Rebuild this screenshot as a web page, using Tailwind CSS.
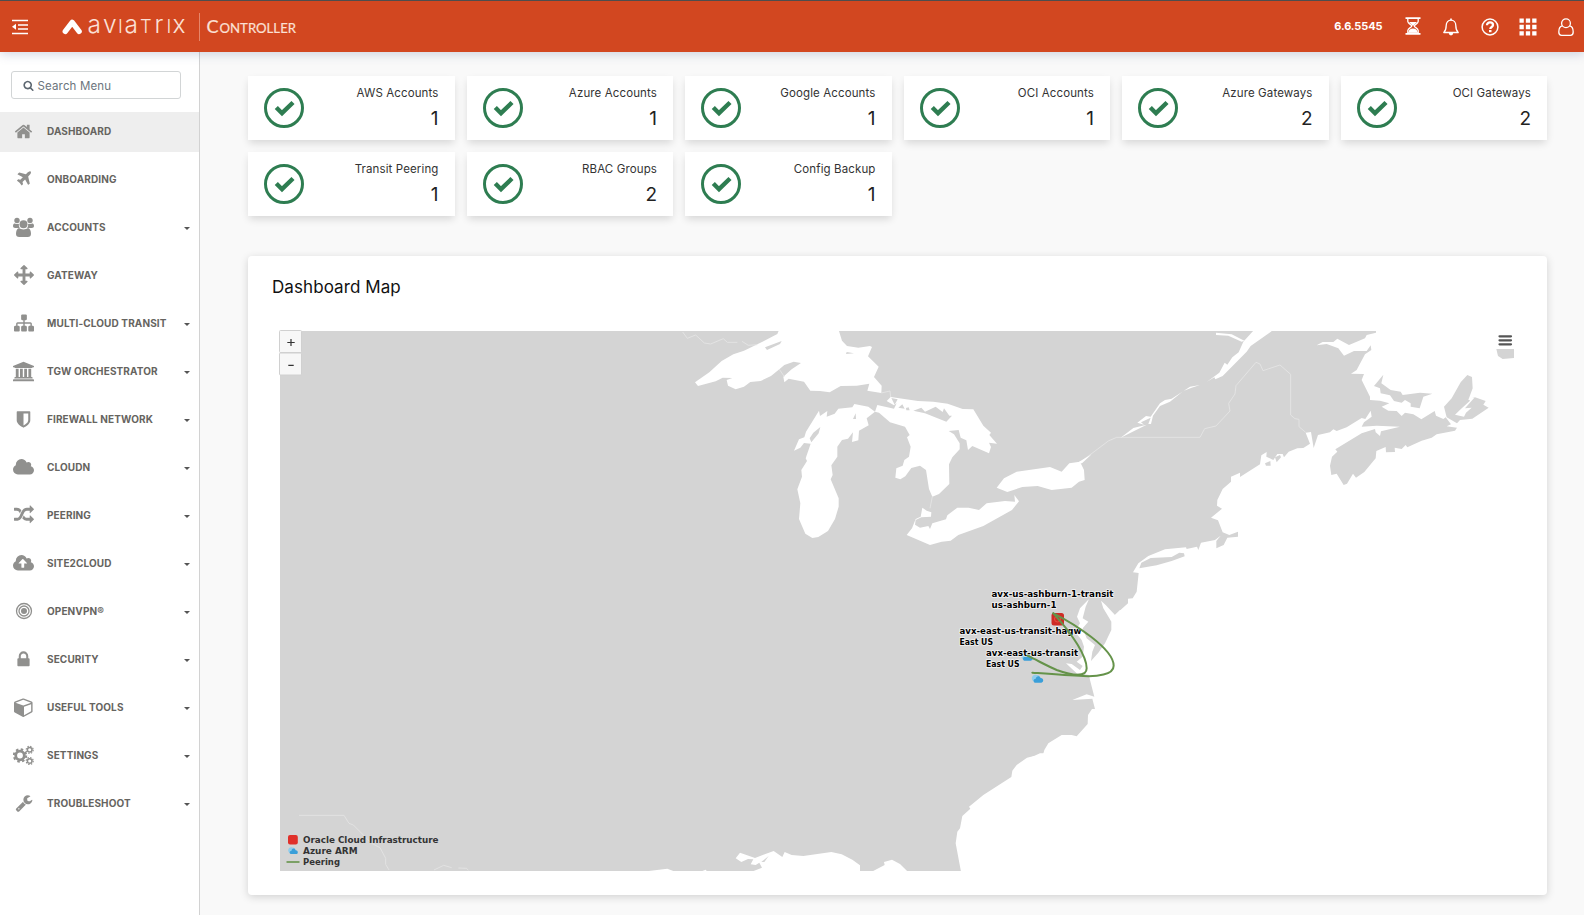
<!DOCTYPE html>
<html lang="en">
<head>
<meta charset="utf-8">
<title>Aviatrix Controller</title>
<script src="https://cdn.jsdelivr.net/npm/@tailwindcss/browser@4"></script>
</head>
<body class="h-screen overflow-hidden bg-[#f9f9f9] font-['Inter',sans-serif] flex flex-col">

<svg class="hidden">
  <symbol id="home" viewBox="0 0 1792 1792"><path d="M1472 992v480q0 26-19 45t-45 19h-384v-384h-256v384h-384q-26 0-45-19t-19-45v-480q0-1 .5-3t.5-3l575-474 575 474q1 2 1 6zm223-69l-62 74q-8 9-21 11h-3q-13 0-21-7l-692-577-692 577q-12 8-24 7-13-2-21-11l-62-74q-8-10-7-23.5t11-21.5l719-599q32-26 76-26t76 26l244 204v-195q0-14 9-23t23-9h192q14 0 23 9t9 23v408l219 182q10 8 11 21.5t-7 23.5z"/></symbol>
  <symbol id="plane" viewBox="0 0 1792 1792"><path d="M1568 160q44 52 12 148t-108 172l-161 161 160 696q5 19-12 33l-128 96q-7 6-19 6-4 0-7-1-15-3-21-16l-279-508-259 259 53 194q5 17-8 31l-96 96q-9 9-23 9h-2q-15-2-24-13l-189-252-252-189q-11-7-13-23-1-13 9-25l96-97q9-9 23-9 6 0 8 1l194 53 259-259-508-279q-14-8-17-24-2-16 9-27l128-128q14-13 30-8l665 159 160-160q76-76 172-108t148 12z"/></symbol>
  <symbol id="users" viewBox="0 0 21 20"><circle cx="4" cy="3" r="2.7"/><circle cx="17" cy="3" r="2.7"/><path d="M0 8.5C0 6.500 1 6 2 6c1 .6 3 .8 4 .2C5.600 8 6 9.300 6.800 10.500H2.200C.8 10.500 0 9.800 0 8.500zM21 8.500c0-2-1-2.500-2-2.500-1 .6-3 .8-4 .2.4 1.800 0 3.100-.8 4.300h4.600c1.400 0 2.200-.7 2.200-2z"/><circle cx="10.500" cy="6.700" r="4"/><path d="M6 10.600c2 1.900 7 1.900 9 0 2 .4 3 2.900 3 5.600 0 2.200-1.200 3.300-3.200 3.300H6.200C4.200 19.500 3 18.400 3 16.200c0-2.700 1-5.200 3-5.600z"/></symbol>
  <symbol id="arrows" viewBox="0 0 1792 1792"><path d="M1792 896q0 26-19 45l-256 256q-19 19-45 19t-45-19-19-45v-128h-384v384h128q26 0 45 19t19 45-19 45l-256 256q-19 19-45 19t-45-19l-256-256q-19-19-19-45t19-45 45-19h128v-384h-384v128q0 26-19 45t-45 19-45-19l-256-256q-19-19-19-45t19-45l256-256q19-19 45-19t45 19 19 45v128h384v-384h-128q-26 0-45-19t-19-45 19-45l256-256q19-19 45-19t45 19l256 256q19 19 19 45t-19 45-45 19h-128v384h384v-128q0-26 19-45t45-19 45 19l256 256q19 19 19 45z"/></symbol>
  <symbol id="sitemap" viewBox="0 0 1792 1792"><path d="M1792 1248v320q0 40-28 68t-68 28h-320q-40 0-68-28t-28-68v-320q0-40 28-68t68-28h96v-192h-512v192h96q40 0 68 28t28 68v320q0 40-28 68t-68 28h-320q-40 0-68-28t-28-68v-320q0-40 28-68t68-28h96v-192h-512v192h96q40 0 68 28t28 68v320q0 40-28 68t-68 28h-320q-40 0-68-28t-28-68v-320q0-40 28-68t68-28h96v-192q0-52 38-90t90-38h512v-192h-96q-40 0-68-28t-28-68v-320q0-40 28-68t68-28h320q40 0 68 28t28 68v320q0 40-28 68t-68 28h-96v192h512q52 0 90 38t38 90v192h96q40 0 68 28t28 68z"/></symbol>
  <symbol id="bank" viewBox="0 0 1920 1792"><path d="M960 0l960 384v128h-128q0 26-20.500 45t-48.500 19h-1526q-28 0-48.500-19t-20.500-45h-128v-128zm-704 640h256v768h128v-768h256v768h128v-768h256v768h128v-768h256v768h59q28 0 48.500 19t20.500 45v64h-1664v-64q0-26 20.500-45t48.500-19h59v-768zm1595 960q28 0 48.500 19t20.500 45v128h-1920v-128q0-26 20.500-45t48.500-19h1782z"/></symbol>
  <symbol id="shield" viewBox="0 0 1792 1792"><path d="M1344 960v-640h-448v1137q119-63 213-137 235-184 235-360zm192-768v768q0 86-33.500 170.500t-83 150-118 127.500-126.500 103-121 77.500-89.500 49.500-42.500 20q-12 6-26 6t-26-6q-16-7-42.500-20t-89.500-49.500-121-77.500-126.500-103-118-127.500-83-150-33.500-170.500v-768q0-26 19-45t45-19h1152q26 0 45 19t19 45z"/></symbol>
  <symbol id="cloud" viewBox="0 0 1920 1792"><path d="M1920 1152q0 159-112.500 271.500t-271.500 112.500h-1088q-185 0-316.500-131.500t-131.500-316.500q0-132 71-241.500t187-163.500q-2-28-2-43 0-212 150-362t362-150q158 0 286.500 88t187.500 230q70-62 166-62 106 0 181 75t75 181q0 75-41 138 129 30 213 134.500t84 239.500z"/></symbol>
  <symbol id="upload" viewBox="0 0 1920 1792"><path fill-rule="evenodd" d="M1280 864q0-14-9-23l-352-352q-9-9-23-9t-23 9l-351 351q-10 12-10 24 0 14 9 23t23 9h224v352q0 13 9.500 22.500t22.500 9.500h192q13 0 22.500-9.500t9.500-22.500v-352h224q13 0 22.500-9.500t9.500-22.500zm640 288q0 159-112.500 271.500t-271.500 112.500h-1088q-185 0-316.500-131.500t-131.500-316.500q0-132 71-241.500t187-163.500q-2-28-2-43 0-212 150-362t362-150q158 0 286.500 88t187.500 230q70-62 166-62 106 0 181 75t75 181q0 75-41 138 129 30 213 134.500t84 239.500z"/></symbol>
  <symbol id="random" viewBox="0 0 1792 1792"><path d="M666 481q-60 92-137 273-22-45-37-72.500t-40.500-63.500-51-56.500-63-35-81.500-14.500h-224q-14 0-23-9t-9-23v-192q0-14 9-23t23-9h224q250 0 410 225zm1126 799q0 14-9 23l-320 320q-9 9-23 9-13 0-22.500-9.500t-9.500-22.500v-192q-32 0-85 .5t-81 1-73-1-71-5-64-10.500-63-18.500-58-28.500-59-40-55-53.500-56-69.500q59-93 136-273 22 45 37 72.500t40.500 63.500 51 56.500 63 35 81.500 14.500h256v-192q0-14 9-23t23-9q12 0 24 10l319 319q9 9 9 23zm0-896q0 14-9 23l-320 320q-9 9-23 9-13 0-22.500-9.500t-9.500-22.500v-192h-256q-48 0-87 15t-69 45-51 61.500-45 77.500q-32 62-78 171-29 66-49.500 111t-54 105-64 100-74 83-90 68.500-106.500 42-128 16.500h-224q-14 0-23-9t-9-23v-192q0-14 9-23t23-9h224q48 0 87-15t69-45 51-61.500 45-77.500q32-62 78-171 29-66 49.500-111t54-105 64-100 74-83 90-68.500 106.500-42 128-16.500h256v-192q0-14 9-23t23-9q12 0 24 10l319 319q9 9 9 23z"/></symbol>
  <symbol id="target" viewBox="0 0 20 20"><circle cx="10" cy="10" r="3"/><g fill="none" stroke="currentColor" stroke-width="1.300"><circle cx="10" cy="10" r="5"/><circle cx="10" cy="10" r="7.500"/></g></symbol>
  <symbol id="lock" viewBox="0 0 1792 1792"><path d="M640 768h512v-192q0-106-75-181t-181-75-181 75-75 181v192zm832 96v576q0 40-28 68t-68 28h-960q-40 0-68-28t-28-68v-576q0-40 28-68t68-28h32v-192q0-184 132-316t316-132 316 132 132 316v192h32q40 0 68 28t28 68z"/></symbol>
  <symbol id="cube" viewBox="0 0 1792 1792"><path d="M896 1629l640-349v-636l-640 233v752zm-64-865l698-254-698-254-698 254zm832-252v768q0 35-18 65t-49 47l-704 384q-28 16-61 16t-61-16l-704-384q-31-17-49-47t-18-65v-768q0-40 23-73t61-47l704-256q22-8 44-8t44 8l704 256q38 14 61 47t23 73z"/></symbol>
  <symbol id="cogs" viewBox="0 0 21 20"><g fill="none" stroke="currentColor"><circle cx="7" cy="10" r="4.300" stroke-width="2.800"/><circle cx="7" cy="10" r="6.200" stroke-width="2" stroke-dasharray="2.500 2.370"/><circle cx="16.700" cy="4.300" r="2.300" stroke-width="1.500"/><circle cx="16.700" cy="4.300" r="3.500" stroke-width="1.200" stroke-dasharray="1.400 1.350"/><circle cx="16.700" cy="15.500" r="2.300" stroke-width="1.500"/><circle cx="16.700" cy="15.500" r="3.500" stroke-width="1.200" stroke-dasharray="1.400 1.350"/></g></symbol>
  <symbol id="wrench" viewBox="0 0 1792 1792"><path d="M448 1472q0-26-19-45t-45-19-45 19-19 45 19 45 45 19 45-19 19-45zm644-420l-682 682q-37 37-90 37-52 0-91-37l-106-108q-38-36-38-90 0-53 38-91l681-681q39 98 114.500 173.500t173.500 114.500zm634-435q0 39-23 106-47 134-164.500 217.500t-258.500 83.500q-185 0-316.500-131.500t-131.500-316.500 131.500-316.500 316.500-131.500q58 0 121.500 16.500t107.500 46.500q16 11 16 28t-16 28l-293 169v224l193 107q5-3 79-48.500t135.500-81 70.500-35.500q15 0 23.500 10t8.500 25z"/></symbol>
  <symbol id="check" viewBox="0 0 40 40"><circle cx="20" cy="20" r="18.500" fill="none" stroke="#2e7d51" stroke-width="3"/><path d="M12.300 19.500l5.700 5.700L29 14.500" fill="none" stroke="#2e7d51" stroke-width="4.400"/></symbol>
  <symbol id="azure" viewBox="0 0 13 10"><path d="M.8 5.500C.5 2.500 3 .5 5.500 1.500 8 1 9 3 9 4L4 7.500 2 7.800z" fill="#8fcdec"/><path d="M4 9.200C1.800 8.600 2.200 5 4.800 5.200 5 2 9 1.800 9.600 4.600c3-.2 3.600 4.200.8 4.600z" fill="#3a9fd9"/></symbol>
</svg>

<header class="relative z-10 flex h-[52px] shrink-0 items-center border-t border-[#4d4d4d] bg-[#d24720] text-white shadow-[0_2px_10px_rgba(90,100,150,0.28)]">
  <svg class="ml-3 h-4 w-4" viewBox="0 0 16 16"><path d="M0 1.500h16M6 6h10M6 10h10M0 14.500h16" stroke="#fff" stroke-width="1.300"/><path d="M4 4.800v6L0 7.800z" fill="#fff"/></svg>
  <svg class="ml-[32px] h-[51px] w-[250px]" viewBox="60 1 250 51">
    <path d="M65.300 31.300L72.200 22.300 79.100 31.300" fill="none" stroke="#fff" stroke-width="5.400" stroke-linecap="round" stroke-linejoin="round"/>
    <text fill="#fbe0d6" font-family="Inter" font-weight="300" font-size="24.500" y="33.300"><tspan x="87.500">a</tspan><tspan x="103">v</tspan><tspan x="118" font-size="18.300">I</tspan><tspan x="124.500">a</tspan><tspan x="140" font-size="18.300">T</tspan><tspan x="154.500">r</tspan><tspan x="166.500" font-size="18.300">I</tspan><tspan x="172.500">x</tspan></text>
    <path d="M199.500 13v28" stroke="#e6866a"/>
    <text fill="#fbe0d6" stroke="#fbe0d6" stroke-width=".2" font-family="Lato" font-weight="400" y="33.300"><tspan x="206.500" font-size="18">C</tspan><tspan x="219.500" font-size="14" textLength="76.500" lengthAdjust="spacingAndGlyphs">ONTROLLER</tspan></text>
  </svg>
  <span class="ml-auto mr-[22px] text-[11px] font-bold leading-4 tracking-[-0.1px] mb-px">6.6.5545</span>
  <svg class="mr-[22.300px] mb-px h-[18px] w-4" viewBox="0 0 16 18"><path d="M.5 1.200h15M.5 16.800h15" stroke="#fff" stroke-width="1.800"/><path d="M2.800 2v2.500C3 7 6.800 7.500 6.800 9S3 11 2.800 13.500V16h10.400v-2.500C13 11 9.200 10.500 9.200 9S13 7 13.200 4.500V2" fill="none" stroke="#fff" stroke-width="1.300"/><path d="M4 5h8L8 9zM3.500 15.500c0-2.500 2-4 4.500-4s4.500 1.500 4.500 4z" fill="#fff"/></svg>
  <svg class="mr-[21.700px] h-[18px] w-4" viewBox="0 0 16 18"><path d="M.8 14.500C3 12.500 3.200 10 3.200 7.500c0-3.200 2-5.300 4.800-5.300s4.800 2.100 4.800 5.300c0 2.500.2 5 2.400 7z" fill="none" stroke="#fff" stroke-width="1.300" stroke-linejoin="round"/><path d="M5.800 15h4.400a2.200 2.400 0 0 1-4.400 0zM7.200.5h1.600v2H7.200z" fill="#fff"/></svg>
  <svg class="mr-[20px] h-[18px] w-[18px]" viewBox="0 0 18 18"><circle cx="9" cy="9" r="7.900" fill="none" stroke="#fff" stroke-width="1.500"/><path d="M6 7.200C6 3.400 12 3.800 12 7c0 2-2.700 1.900-2.700 4" fill="none" stroke="#fff" stroke-width="2.300"/><path d="M8 12h2.500v2.200H8z" fill="#fff"/></svg>
  <svg class="mr-[21.500px] h-[18px] w-[18px]" viewBox="0 0 18 18" fill="#fff"><path d="M.5.500h4.300v4.300H.5zM6.850.500h4.300v4.300H6.850zM13.200.500h4.300v4.300h-4.300zM.5 6.850h4.300v4.300H.5zM6.850 6.850h4.300v4.300H6.850zM13.200 6.850h4.300v4.300h-4.300zM.5 13.200h4.300v4.300H.5zM6.850 13.200h4.300v4.300H6.850zM13.200 13.200h4.300v4.300h-4.300z"/></svg>
  <svg class="mr-[10px] h-[18px] w-4" viewBox="0 0 16 18" fill="none" stroke="#fff" stroke-width="1.300"><circle cx="8" cy="5.200" r="4.400"/><path d="M4.300 7.800C1.800 8.300.8 11 .8 14c0 2 1 3.300 2.800 3.300h8.800c1.800 0 2.800-1.300 2.800-3.300 0-3-1-5.700-3.500-6.200"/></svg>
</header>

<div class="flex min-h-0 flex-1">
  <nav class="w-[200px] shrink-0 border-r border-[#d2d2d2] bg-white pt-[19px]">
    <div class="ml-[11px] flex h-7 w-[170px] items-center gap-1 rounded-[3px] border border-[#d2d5d6] pl-[10.500px] text-[#6c757d]">
      <svg class="h-[11px] w-[11px]" viewBox="0 0 1792 1792" fill="#5c6670"><path d="M1216 832q0-185-131.500-316.500t-316.500-131.500-316.500 131.500-131.500 316.500 131.500 316.500 316.500 131.500 316.500-131.500 131.500-316.500zm512 832q0 52-38 90t-90 38q-54 0-90-38l-343-342q-179 124-399 124-143 0-273.500-55.500t-225-150-150-225-55.500-273.500 55.500-273.500 150-225 225-150 273.500-55.500 273.500 55.500 225 150 150 225 55.500 273.500q0 220-124 399l343 343q37 37 37 90z"/></svg>
      <span class="pt-px text-[11.500px] leading-4 tracking-[0.15px]">Search Menu</span>
    </div>
    <ul id="menu" class="mt-[13px] flex flex-col gap-2"></ul>
  </nav>

  <main class="min-w-0 flex-1 pl-12 pr-[37px] pt-6">
    <section id="cards" class="grid grid-cols-6 gap-3"></section>

    <section class="mt-10 h-[639px] rounded-[4px] bg-white px-6 pt-[19px] shadow-[0_2px_8px_rgba(0,0,0,0.16)]">
      <h2 class="h-6 text-[17px] leading-6 tracking-[0.08px] text-[#111]">Dashboard Map</h2>
      <svg class="ml-2 mt-8 block h-[540px] w-[1234px] overflow-visible" viewBox="280 331 1234 540" stroke-linejoin="round">
        <rect x="280" y="331" width="1234" height="540" fill="#d4d4d4"/>
        <!-- Atlantic, from the Gulf of St. Lawrence to New Jersey -->
        <g transform="translate(1220 320) scale(.333333)">
          <path fill="#fff" d="M468 30L468 38 440 45 435 55 387 75 352 56 340 66 308 66 290 76 320 72 355 85 372 107 402 93 440 93 452 76 454 90 435 103 410 150 393 161 432 162 425 180 450 230 450 240 480 242 508 250 485 260 505 272 530 273 545 288 555 278 580 283 604 298 644 273 648 287 670 297 677 292 693 313 680 319 711 323 705 332 650 343 635 353 605 362 562 382 557 375 545 387 524 383 525 396 498 397 497 381 469 393 467 415 433 456 408 473 399 461 381 491 371 495 350 461 334 465 330 437 336 410 352 395 346 388 425 340 465 327 467 337 480 348 483 334 540 320 470 317 425 320 432 307 455 290 452 272 436 297 425 294 380 322 350 333 340 328 330 337 294 345 281 384 273 336 257 338 270 371 250 384 232 385 206 395 192 412 188 402 172 402 160 420 139 410 140 396 124 406 120 433 60 471 60 458 33 470 33 485 8 507-8 540-9 557 6 566-27 593-6 601 8 637 28 645 54 635 54 650 22 653 11 675-11 685-11 663 2 647-15 660-57 668-65 690-69 680-100 687-102 682-165 688-215 708-245 730-261 757-244 759-250 815-262 835-276 836-276 850-315 885 890 885 890 30z"/>
          <g fill="#d4d4d4">
            <path d="M490 164L484 190 512 210 542 215 548 225 600 218 637 221 610 230 599 265 572 260 572 250 555 240 545 248 522 243 510 226 482 220 480 205 462 198z"/>
            <path d="M742 165L756 171 758 205 745 240 763 231 797 243 790 254 806 263 757 296 720 300 711 310 680 292 672 260 695 235 722 187z"/>
            <path d="M829 87H882V114L848 117 834 108z"/>
            <path d="M135 430L151 423 152 437 138 437zM165 412L180 405 183 412 170 427z"/>
            <path d="M-242 745L-236 728-208 714-145 711-122 698-108 700-106 709-145 723-190 736z"/>
          </g>
          <path fill="#fff" d="M745 237L765 231 755 242 735 265 755 263 738 278 732 290 705 284 722 268 750 242z"/>
        </g>
        <!-- Delaware and Chesapeake bays, Carolinas -->
        <g transform="translate(940 560) scale(.333333)" fill="#fff">
          <path d="M1722 150L540 150 525 165 497 135 483 122 490 145 508 175 514 185 514 210 495 250 475 278 453 303 457 275 465 255 440 235 428 205 445 185 428 175 437 140 447 117 420 145 411 170 420 190 405 215 425 240 432 260 428 290 410 305 428 318 420 330 395 312 378 310 410 340 447 345 450 360 463 410 440 403 397 420 457 416 465 447 456 447 444 465 443 492 410 529 395 525 365 525 325 550 313 570 306 595 282 588 250 602 1722 602z"/>
        </g>
        <!-- Georgia, Florida and the Gulf coast -->
        <g transform="translate(600 700) scale(.333333)">
          <path fill="#fff" d="M1320 160L1302 168 1281 173 1250 195 1237 212 1234 231 1150 285 1107 320 1111 326 1087 348 1080 385 1072 395 1067 430 1083 515 2744 515 2744 160z"/>
          <path fill="#fff" d="M407 475L420 458 465 474 521 453 547 471 554 456 575 465 610 468 694 456 725 463 757 479 780 496 780 515 455 515 486 503 478 488 467 495 452 493 460 478 444 477 424 486zM818 514L854 495 852 486 876 479 900 492 922 514zM140 514L202 506 222 514zM305 514L317 509 321 514z"/>
          <path fill="#d4d4d4" d="M484 486L506 468 493 486z"/>
        </g>
        <!-- Great Lakes -->
        <g transform="translate(670 320) scale(.333333)">
          <g fill="#fff">
            <path d="M327 30L322 42 262 73 222 92 190 103 155 123 118 157 75 187 84 198 137 184 158 173 187 174 170 180 174 197 197 208 222 200 241 186 272 183 303 168 328 148 343 135 371 125 393 129 365 148 340 170 343 187 356 176 402 185 421 212 450 213 479 217 512 198 560 197 598 191 592 212 634 219 635 197 612 171 626 140 594 109 606 81 600 78 565 83 531 78 516 62 506 30z"/>
            <path d="M447 272L450 288 472 273 470 290 494 281 505 266 547 262 553 252 595 260 615 275 590 295 596 316 567 332 565 361 546 366 549 337 534 356 516 360 502 380 502 410 484 436 488 465 482 478 506 535 506 560 495 597 474 633 445 651 427 654 406 641 387 597 391 550 382 508 396 470 394 450 411 423 407 415 422 371 402 369 391 383 372 392 387 358 403 352 408 335z"/>
            <path d="M615 275L622 255 672 266 680 250 672 256 650 243 662 231 744 243 790 245 833 251 878 267 910 268 940 317 963 338 958 345 981 371 957 368 963 381 957 400 907 378 894 390 889 361 872 353 866 330 836 333 852 343 869 370 869 388 847 412 837 433 838 492 807 522 787 530 777 507 768 450 750 437 724 444 706 469 691 478 676 473 679 445 698 437 703 420 717 410 722 380 711 352 719 345 705 320 660 307 627 278z"/>
            <path d="M757 563L770 572 784 577 783 590 754 592 737 600 735 614 750 623 775 618 780 627 787 610 828 598 832 586 862 563 896 563 927 570 950 550 1005 543 1035 545 1033 525 1047 544 1026 570 940 618 865 645 842 662 815 665 780 675 710 645 726 625 737 597 752 590z"/>
            <path d="M980 503L1002 475 1040 455 1140 441 1175 455 1198 430 1230 425 1242 450 1244 480 1227 485 1205 503 1145 510 1103 498 1057 501 1012 516z"/>
          </g>
          <path fill="#d4d4d4" d="M285 82L335 63 330 72 291 90zM530 96L552 100 528 102zM451 321L446 340 424 367 419 355 430 338zM557 280L558 297 549 297zM730 272L765 280 829 305 846 287 838 287 822 265 818 276 797 260 765 275 754 263zM685 263L697 253 704 266zM664 234L683 238 674 254zM708 264L716 262 719 271 709 271z"/>
          <path fill="none" stroke="#e6e6e6" stroke-width="2.500" d="M38 36L52 55 77 45 103 69 122 72 160 56 172 67 202 67M216 64L235 76 262 74M328 148L343 170M634 219L660 213 662 231M787 530L780 565"/>
        </g>
        <!-- St. Lawrence river and state borders -->
        <g transform="translate(980 320) scale(.333333)">
          <path fill="none" stroke="#e6e6e6" stroke-width="2.500" d="M300 427L385 363 410 352 660 352 674 326 708 318 750 273 746 250 765 222 768 197 828 127 840 132 849 152 900 135 932 163 932 285 945 296 957 298 957 320 977 337"/>
          <path fill="#fff" d="M822 30L790 65 776 97 757 112 742 134 734 128 718 158 680 186 703 172 706 178 728 168 800 95 812 78 880 30zM708 38L755 43 793 62 785 65 745 47 708 45zM422 353L460 324 500 314zM472 308L498 288 512 290 540 250 555 240 575 236 630 200 660 195 635 203 610 213 570 245 540 258 519 287 513 312 505 312 512 293 483 307 492 314zM290 430L335 403 306 430z"/>
        </g>
        <path transform="translate(270 780) scale(.333333)" fill="none" stroke="#e4e4e4" stroke-width="2.500" d="M87 106H222L237 130 250 135 280 165 305 190 330 203 347 235 347 253 357 270M492 270L521 256 545 263M565 264L590 265 595 271"/>

        <!-- Gateways and peering links -->
        <rect x="1051.500" y="613" width="12.500" height="12.500" rx="2.500" fill="#cf2b25"/>
        <circle cx="1057.500" cy="619" r="3" fill="none" stroke="#e8503f"/>
        <use href="#azure" x="1020.500" y="651.500" width="13" height="10"/>
        <use href="#azure" x="1031" y="673.500" width="13" height="10"/>
        <g font-family="'DejaVu Sans'" font-weight="700" font-size="8.600" fill="#000" stroke="#fff" stroke-width="1.600" stroke-opacity=".75" paint-order="stroke">
          <text x="991.500" y="596.800" textLength="122" lengthAdjust="spacingAndGlyphs">avx-us-ashburn-1-transit</text>
          <text x="991.500" y="607.800" textLength="65" lengthAdjust="spacingAndGlyphs">us-ashburn-1</text>
          <text x="959.500" y="633.800" textLength="122" lengthAdjust="spacingAndGlyphs">avx-east-us-transit-hagw</text>
          <text x="959.500" y="644.800" textLength="33.500" lengthAdjust="spacingAndGlyphs">East US</text>
          <text x="986" y="655.800" textLength="92" lengthAdjust="spacingAndGlyphs">avx-east-us-transit</text>
          <text x="986" y="666.800" textLength="33.500" lengthAdjust="spacingAndGlyphs">East US</text>
        </g>
        <g transform="translate(940 560) scale(.333333)" fill="none" stroke="#65934a" stroke-width="6" stroke-linecap="round">
          <path d="M340 160C400 225 440 290 440 325 440 352 400 348 350 330 320 317 290 300 262 287"/>
          <path d="M340 160C400 190 521 265 521 317 521 345 470 350 430 348 380 346 330 342 277 338"/>
        </g>

        <!-- Legend -->
        <rect x="288" y="835" width="9.800" height="9.500" rx="2" fill="#e0302a"/>
        <use href="#azure" x="287.500" y="846" width="11" height="9"/>
        <path d="M286.500 862h13" stroke="#65934a" stroke-width="1.600"/>
        <g font-family="'DejaVu Sans'" font-weight="700" font-size="9.300" fill="#333">
          <text x="303" y="843" textLength="135.500" lengthAdjust="spacingAndGlyphs">Oracle Cloud Infrastructure</text>
          <text x="303" y="854" textLength="54.500" lengthAdjust="spacingAndGlyphs">Azure ARM</text>
          <text x="303" y="865" textLength="37" lengthAdjust="spacingAndGlyphs">Peering</text>
        </g>

        <!-- Zoom buttons and chart menu -->
        <g fill="#f7f7f7" stroke="#d0d0d0"><rect x="279.500" y="330.500" width="22" height="22" rx="1"/><rect x="279.500" y="353" width="22" height="22" rx="1"/></g>
        <path d="M287.300 342.500h7.400M291 339v7M288.300 365.300h5.400" stroke="#333" stroke-width="1.200"/>
        <path d="M1499.500 336.300h11.500M1499.500 340.300h11.500M1499.500 344.300h11.500" stroke="#555" stroke-width="2.200" stroke-linecap="round"/>
      </svg>
    </section>
  </main>
</div>

<script>
  const cards = [['AWS Accounts', 1], ['Azure Accounts', 1], ['Google Accounts', 1], ['OCI Accounts', 1], ['Azure Gateways', 2], ['OCI Gateways', 2], ['Transit Peering', 1], ['RBAC Groups', 2], ['Config Backup', 1]];
  document.getElementById('cards').innerHTML = cards.map(([label, count]) => `
    <article class="flex h-16 justify-between bg-white px-4 shadow-[0_4px_8px_-1px_rgba(0,0,0,0.14)]">
      <svg class="mt-3 h-10 w-10"><use href="#check"/></svg>
      <div class="pt-[9px] text-right text-[#333]">
        <div class="text-[11.500px] leading-4 tracking-[0.12px]">${label}</div>
        <div class="mt-[6px] text-[19px] leading-6 text-[#222]">${count}</div>
      </div>
    </article>`).join('');

  const menu = [['home', 'DASHBOARD', 19], ['plane', 'ONBOARDING', 18], ['users', 'ACCOUNTS', 21], ['arrows', 'GATEWAY', 20], ['sitemap', 'MULTI-CLOUD TRANSIT', 20], ['bank', 'TGW ORCHESTRATOR', 21], ['shield', 'FIREWALL NETWORK', 19], ['cloud', 'CLOUDN', 21], ['random', 'PEERING', 20], ['upload', 'SITE2CLOUD', 21], ['target', 'OPENVPN®', 20], ['lock', 'SECURITY', 19], ['cube', 'USEFUL TOOLS', 20], ['cogs', 'SETTINGS', 21], ['wrench', 'TROUBLESHOOT', 18]];
  const leaf = ['DASHBOARD', 'ONBOARDING', 'GATEWAY'];
  document.getElementById('menu').innerHTML = menu.map(([icon, label, size], i) => `
    <li class="flex h-10 items-center pb-[2px] pr-[9px] text-[#666460] ${i ? '' : 'bg-[#eee]'}">
      <span class="flex w-[47px] justify-center text-[#90908e]"><svg fill="currentColor" style="width:${size}px;height:${size}px"><use href="#${icon}"/></svg></span>
      <span class="flex-1 text-[10px] font-bold tracking-[0.12px]">${label}</span>
      ${leaf.includes(label) ? '' : '<svg class="mt-[2px] h-[3px] w-[6px]" viewBox="0 0 6 3"><path d="M0 0h6L3 3z" fill="#555"/></svg>'}
    </li>`).join('');
</script>
</body>
</html>
